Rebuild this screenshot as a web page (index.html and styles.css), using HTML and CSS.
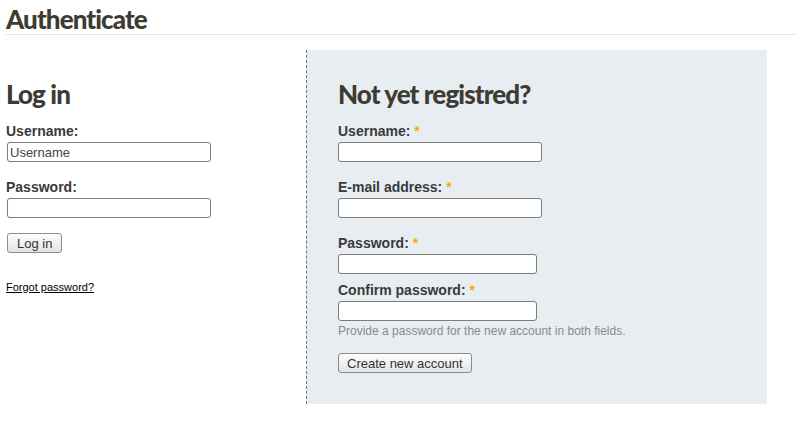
FILE: index.html
```html
<!DOCTYPE html>
<html lang="en">
<head>
    <meta charset="UTF-8">
    <meta name="viewport" content="width=device-width, initial-scale=1.0">
    <title>Authenticate</title>
    <link rel="stylesheet" href="styles.css">
</head>
<body>
    <h1 class="page-title">Authenticate</h1>

    <div class="columns">
        <div class="login-box">
            <h2>Log in</h2>
            <div class="form-item">
                <label for="login-name">Username:</label>
                <input type="text" id="login-name" value="Username">
            </div>
            <div class="form-item">
                <label for="login-pass">Password:</label>
                <input type="password" id="login-pass">
            </div>
            <button class="form-button">Log in</button>
            <a class="forgot-link" href="#">Forgot password?</a>
        </div>

        <div class="register-box">
            <h2>Not yet registred?</h2>
            <div class="form-item">
                <label for="reg-name">Username: <span class="required">*</span></label>
                <input type="text" id="reg-name">
            </div>
            <div class="form-item">
                <label for="reg-mail">E-mail address: <span class="required">*</span></label>
                <input type="text" id="reg-mail">
            </div>
            <div class="form-item pass-item">
                <label for="reg-pass">Password: <span class="required">*</span></label>
                <input type="password" id="reg-pass" class="short">
            </div>
            <div class="form-item confirm-item">
                <label for="reg-pass2">Confirm password: <span class="required">*</span></label>
                <input type="password" id="reg-pass2" class="short">
                <div class="description">Provide a password for the new account in both fields.</div>
            </div>
            <button class="form-button">Create new account</button>
        </div>
    </div>
</body>
</html>
```

FILE: styles.css
```css
body {
    font-family: "Liberation Sans", Arial, sans-serif;
    color: #3a3a3a;
    background: #ffffff;
    margin: 0;
    padding: 0 0 0 6px;
}
h1, h2 {
    font-family: Lato, "Liberation Sans", Arial, sans-serif;
    font-weight: 900;
    font-size: 26px;
    letter-spacing: -0.9px;
    color: #3d3b33;
    margin: 0;
}
.page-title {
    line-height: 29px;
    margin-top: 5px;
    border-bottom: 1px solid #e6e6e6;
}
.columns {
    display: flex;
    width: 761px;
    margin-top: 15px;
}
.login-box {
    width: 300px;
    padding-top: 29px;
}
.register-box {
    flex: 1;
    background: #e8edf1;
    border-left: 1px dashed #6a70ae;
    padding: 29px 0 31px 31px;
}
h2 {
    line-height: 30px;
    margin-bottom: 14px;
}
.form-item {
    margin-bottom: 17px;
}
.form-item label {
    display: block;
    font-size: 14px;
    font-weight: bold;
    line-height: 17px;
    margin-bottom: 2px;
}
.required {
    color: #f5b000;
}
.form-item input {
    display: block;
    box-sizing: border-box;
    width: 204px;
    height: 20px;
    padding: 0 2px;
    border: 1px solid #7b7b7b;
    border-radius: 3px;
    background: #ffffff;
    font-family: "Liberation Sans", Arial, sans-serif;
    font-size: 13px;
    color: #444444;
}
.login-box input {
    margin-left: 1px;
}
.form-item input.short {
    width: 199px;
}
.pass-item {
    margin-bottom: 8px;
}
.confirm-item {
    margin-bottom: 15px;
}
.description {
    font-size: 12px;
    line-height: 14px;
    color: #8a8a8a;
    margin-top: 3px;
}
.form-button {
    display: block;
    height: 20px;
    padding: 0 8px;
    border: 1px solid #8c8c8c;
    border-radius: 3px;
    background: linear-gradient(#fdfdfd, #e4e4e4);
    font-family: "Liberation Sans", Arial, sans-serif;
    font-size: 13px;
    color: #333333;
    cursor: pointer;
}
.login-box .form-button {
    margin: -2px 0 0 1px;
    padding: 0 9px;
}
.forgot-link {
    display: block;
    margin-top: 27px;
    font-size: 11px;
    line-height: 14px;
    color: #000000;
}
```
